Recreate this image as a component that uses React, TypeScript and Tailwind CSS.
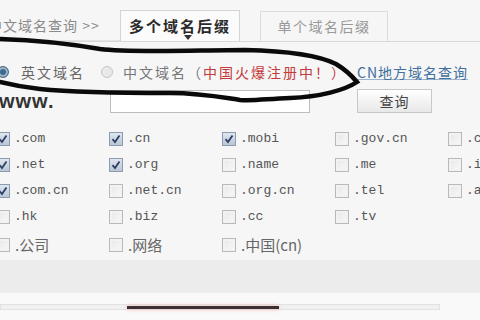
import React from 'react';

const cjk = "font-['Noto_Sans_CJK_SC','Noto_Sans',sans-serif]";

type Item = { label: string; checked?: boolean; cn?: boolean };

const columns: Item[][] = [
  [{ label: '.com', checked: true }, { label: '.net', checked: true }, { label: '.com.cn', checked: true }, { label: '.hk' }, { label: '.公司', cn: true }],
  [{ label: '.cn', checked: true }, { label: '.org', checked: true }, { label: '.net.cn' }, { label: '.biz' }, { label: '.网络', cn: true }],
  [{ label: '.mobi', checked: true }, { label: '.name' }, { label: '.org.cn' }, { label: '.cc' }, { label: '.中国(cn)', cn: true }],
  [{ label: '.gov.cn' }, { label: '.me' }, { label: '.tel' }, { label: '.tv' }, { label: '' }],
  [{ label: '.co' }, { label: '.info' }, { label: '.asia' }, { label: '' }, { label: '' }],
];

function Box({ checked }: { checked?: boolean }) {
  if (checked) {
    return (
      <span className="flex h-[14px] w-[14px] shrink-0 items-center justify-center border border-[#8d9bb0] bg-gradient-to-b from-[#dfe6ee] to-[#b9c6d6]">
        <svg width="10" height="10" viewBox="0 0 10 10">
          <path d="M1.5 5.2 L4 8 L8.5 1.5" fill="none" stroke="#2c3e63" strokeWidth="1.8" />
        </svg>
      </span>
    );
  }
  return (
    <span className="h-[14px] w-[14px] shrink-0 border border-[#b9b9b9] bg-gradient-to-br from-[#e6e6e6] to-[#fafafa] shadow-[inset_0_0_0_2px_#f2f2f2]" />
  );
}

export default function App() {
  return (
    <div className="relative h-[320px] w-[480px] overflow-hidden bg-[#f6f6f6] text-[#555]">
      {/* tabs */}
      <div className="flex h-[42px] items-end border-b border-[#d8d8d8]">
        <div className={`${cjk} -ml-[12px] flex h-[30px] w-[132px] items-center border-b border-[#e4e4e4] text-[14px] tracking-[1px] text-[#8a8a8a]`}>
          中文域名查询 &gt;&gt;
        </div>
        <div className={`${cjk} relative flex h-[31px] w-[120px] items-center justify-center border border-b-0 border-[#d5d5d5] bg-[#fbfbfb] text-[15px] font-bold tracking-[2px] text-[#2a2a2a]`}>
          多个域名后缀
          <span className="absolute bottom-[1px] left-[63px] h-0 w-0 border-x-[4px] border-t-[5px] border-x-transparent border-t-[#333]" />
        </div>
        <div className={`${cjk} ml-[20px] flex h-[30px] w-[128px] items-center justify-center border border-b-0 border-[#dcdcdc] text-[14px] tracking-[1.5px] text-[#999]`}>
          单个域名后缀
        </div>
      </div>

      {/* radios */}
      <div className={`${cjk} mt-[15px] flex h-[30px] items-center text-[14px] tracking-[2px]`}>
        <span className="-ml-[3px] h-[12px] w-[12px] rounded-full border border-[#4f6f8a] bg-[#3f6a8e] shadow-[inset_0_0_0_2px_#9fb6c9]" />
        <span className="ml-[12px] text-[#666]">英文域名</span>
        <span className="ml-[16px] h-[12px] w-[12px] rounded-full border border-[#c4c4c4] bg-[#e9e9e9]" />
        <span className="ml-[10px] text-[#777]">中文域名（</span>
        <span className="text-[#c23a3a]">中国火爆注册中！）</span>
        <span className="ml-[10px] tracking-[1px] text-[#3f6f9c] underline decoration-[#9bb3cc]">CN地方域名查询</span>
      </div>

      {/* www input */}
      <div className="flex h-[28px] items-center">
        <span className="-ml-[1px] w-[111px] font-['Liberation_Sans',sans-serif] text-[20px] font-bold tracking-[1px] text-[#333]">www.</span>
        <span className="h-[23px] w-[200px] border border-[#bdbdbd] bg-white" />
        <span className={`${cjk} ml-[47px] flex h-[24px] w-[75px] items-center justify-center border border-[#c8c8c8] bg-gradient-to-b from-white to-[#e8e8e8] text-[14px] tracking-[1px] text-[#444]`}>
          查询
        </span>
      </div>

      {/* suffix grid */}
      <div className="-ml-[4px] mt-[11px] grid grid-cols-[repeat(5,113px)]">
        {columns.map((col, ci) => (
          <div key={ci} className="flex flex-col">
            {col.map((it, ri) => (
              <div key={ri} className={`flex items-center ${ri === 4 ? 'h-[30px]' : 'h-[26px]'}`}>
                {it.label && <Box checked={it.checked} />}
                {it.label && (
                  <span
                    className={
                      it.cn
                        ? `${cjk} ml-[5px] text-[15px] text-[#666]`
                        : "ml-[4px] font-['Liberation_Mono',monospace] text-[13px] text-[#555]"
                    }
                  >
                    {it.label}
                  </span>
                )}
              </div>
            ))}
          </div>
        ))}
      </div>

      {/* bottom */}
      <div className="h-[33px] bg-[#ececec]" />
      <div className="flex h-[28px] items-center bg-[#f9f9f9]">
        <div className="relative h-[6px] w-[440px] border border-[#e2e2e2] bg-[#f1f1f1]">
          <span className="absolute left-[126px] top-[1px] h-[3px] w-[152px] bg-[#3a2f33] shadow-[0_0_4px_#f3b5b5]" />
        </div>
      </div>

      {/* hand-drawn ellipse */}
      <svg className="pointer-events-none absolute left-0 top-0" width="480" height="320" viewBox="0 0 480 320">
        <path
          d="M0 39 C30 40 60 42 100 49 C130 53 200 50 245 50 C290 51 320 56 336 64 C346 70 352 76 357 82 C345 90 320 97 290 98 C265 99 255 101 240 100 C220 97 200 93 170 93 C120 93 70 92 40 89 C20 87 8 84 0 82"
          fill="none"
          stroke="#0a0a0a"
          strokeWidth="4.5"
          strokeLinecap="round"
        />
      </svg>
    </div>
  );
}
